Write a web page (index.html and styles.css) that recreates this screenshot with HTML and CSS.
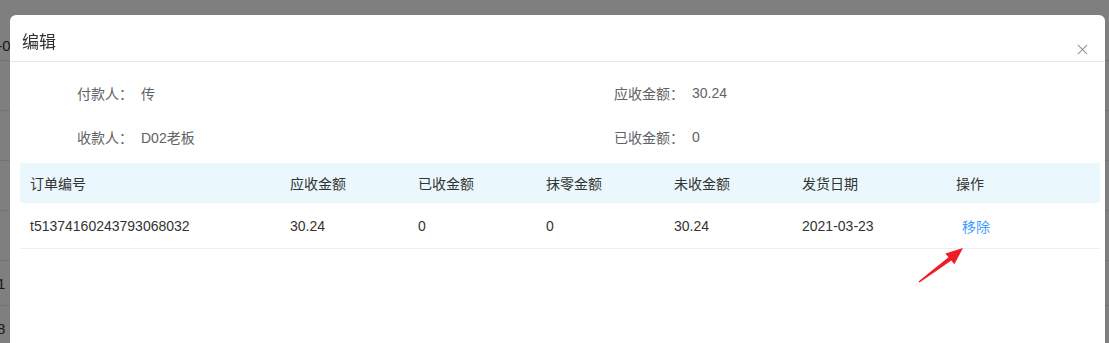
FILE: index.html
```html
<!DOCTYPE html>
<html lang="zh-CN">
<head>
<meta charset="UTF-8">
<meta name="viewport" content="width=device-width, initial-scale=1.0">
<title>编辑</title>
<link rel="stylesheet" href="styles.css">
</head>
<body>
  <div class="page">
    <div class="page-row first"><span class="cut">2021-0</span></div>
    <div class="page-row"></div>
    <div class="page-row"></div>
    <div class="page-row"></div>
    <div class="page-row"></div>
    <div class="page-row"><span class="cut short">1</span></div>
    <div class="page-row"><span class="cut short">8</span></div>
  </div>
  <div class="mask"></div>

  <div class="dialog">
    <div class="dialog-header">
      <span class="dialog-title">编辑</span>
      <svg class="close" width="12" height="12" viewBox="0 0 12 12">
        <path d="M1 1 L11 11 M11 1 L1 11" stroke="#909399" stroke-width="1.2" fill="none"/>
      </svg>
    </div>

    <div class="dialog-body">
      <div class="form">
        <div class="form-item">
          <span class="label">付款人：</span>
          <span class="value">传</span>
        </div>
        <div class="form-item">
          <span class="label">应收金额：</span>
          <span class="value">30.24</span>
        </div>
        <div class="form-item">
          <span class="label">收款人：</span>
          <span class="value">D02老板</span>
        </div>
        <div class="form-item">
          <span class="label">已收金额：</span>
          <span class="value">0</span>
        </div>
      </div>

      <div class="table">
        <div class="tr thead">
          <div class="cell">订单编号</div>
          <div class="cell">应收金额</div>
          <div class="cell">已收金额</div>
          <div class="cell">抹零金额</div>
          <div class="cell">未收金额</div>
          <div class="cell">发货日期</div>
          <div class="cell">操作</div>
        </div>
        <div class="tr tbody">
          <div class="cell">t51374160243793068032</div>
          <div class="cell">30.24</div>
          <div class="cell">0</div>
          <div class="cell">0</div>
          <div class="cell">30.24</div>
          <div class="cell">2021-03-23</div>
          <div class="cell"><a class="link" href="#">移除</a></div>
        </div>
      </div>
    </div>

    <svg class="arrow" width="60" height="50" viewBox="0 0 60 50">
      <path d="M55 8 L46.4 24.3 L43.3 20.6 L11.5 42.6 L10.5 41.4 L40.5 17.2 L37.4 13.5 Z" fill="#ee1c25"/>
    </svg>
  </div>
</body>
</html>
```

FILE: styles.css
```css
body {
  margin: 0;
  font-family: 'Liberation Sans', 'Noto Sans CJK SC', sans-serif;
  font-size: 14px;
  background: #fff;
  overflow: hidden;
}

.page {
  height: 343px;
  padding-top: 30px;
  box-sizing: border-box;
  background: #fff;
}

.page-row {
  height: 44px;
  border-bottom: 1px solid #e6e6e6;
  display: flex;
  align-items: center;
  color: #333;
  font-size: 15px;
}

.page-row:nth-child(n+2):nth-child(-n+5) {
  height: 49px;
}

.page-row.first {
  height: 30px;
}

.cut {
  margin-left: -36px;
}

.cut.short {
  margin-left: -3px;
}

.mask {
  position: fixed;
  inset: 0;
  background: rgba(0, 0, 0, 0.5);
}

.dialog {
  position: absolute;
  top: 15px;
  left: 10px;
  width: 1095px;
  height: 328px;
  background: #fff;
  border-radius: 6px 6px 0 0;
}

.dialog-header {
  height: 46px;
  padding-left: 12px;
  display: flex;
  align-items: center;
  border-bottom: 1px solid #e8e8e8;
  position: relative;
}

.dialog-title {
  font-family: 'Noto Sans CJK SC', sans-serif;
  font-size: 17px;
  color: #303133;
  margin-top: 4px;
}

.close {
  position: absolute;
  right: 17px;
  top: 29px;
  width: 11px;
  height: 11px;
}

.dialog-body {
  padding: 9px 5px 0 10px;
}

.form {
  display: grid;
  grid-template-columns: 551px 1fr;
  margin-bottom: 4px;
}

.form-item {
  display: flex;
  align-items: center;
  height: 44px;
  color: #606266;
}

.label {
  width: 121px;
  padding-right: 8px;
  text-align: right;
  box-sizing: border-box;
  font-family: 'Noto Sans CJK SC', sans-serif;
}

.table {
  width: 1080px;
  color: #333;
}

.tr {
  display: grid;
  grid-template-columns: 260px 128px 128px 128px 128px 154px 1fr;
  align-items: center;
}

.thead {
  height: 40px;
  background: #eaf8fd;
}

.tbody {
  height: 45px;
  border-bottom: 1px solid #ebeef5;
}

.cell {
  padding-left: 10px;
  white-space: nowrap;
}

.thead .cell {
  font-family: 'Noto Sans CJK SC', sans-serif;
}

.link {
  margin-left: 6px;
  color: #409eff;
  text-decoration: none;
  font-family: 'Noto Sans CJK SC', sans-serif;
}

.arrow {
  position: absolute;
  left: 898px;
  top: 225px;
}
```
